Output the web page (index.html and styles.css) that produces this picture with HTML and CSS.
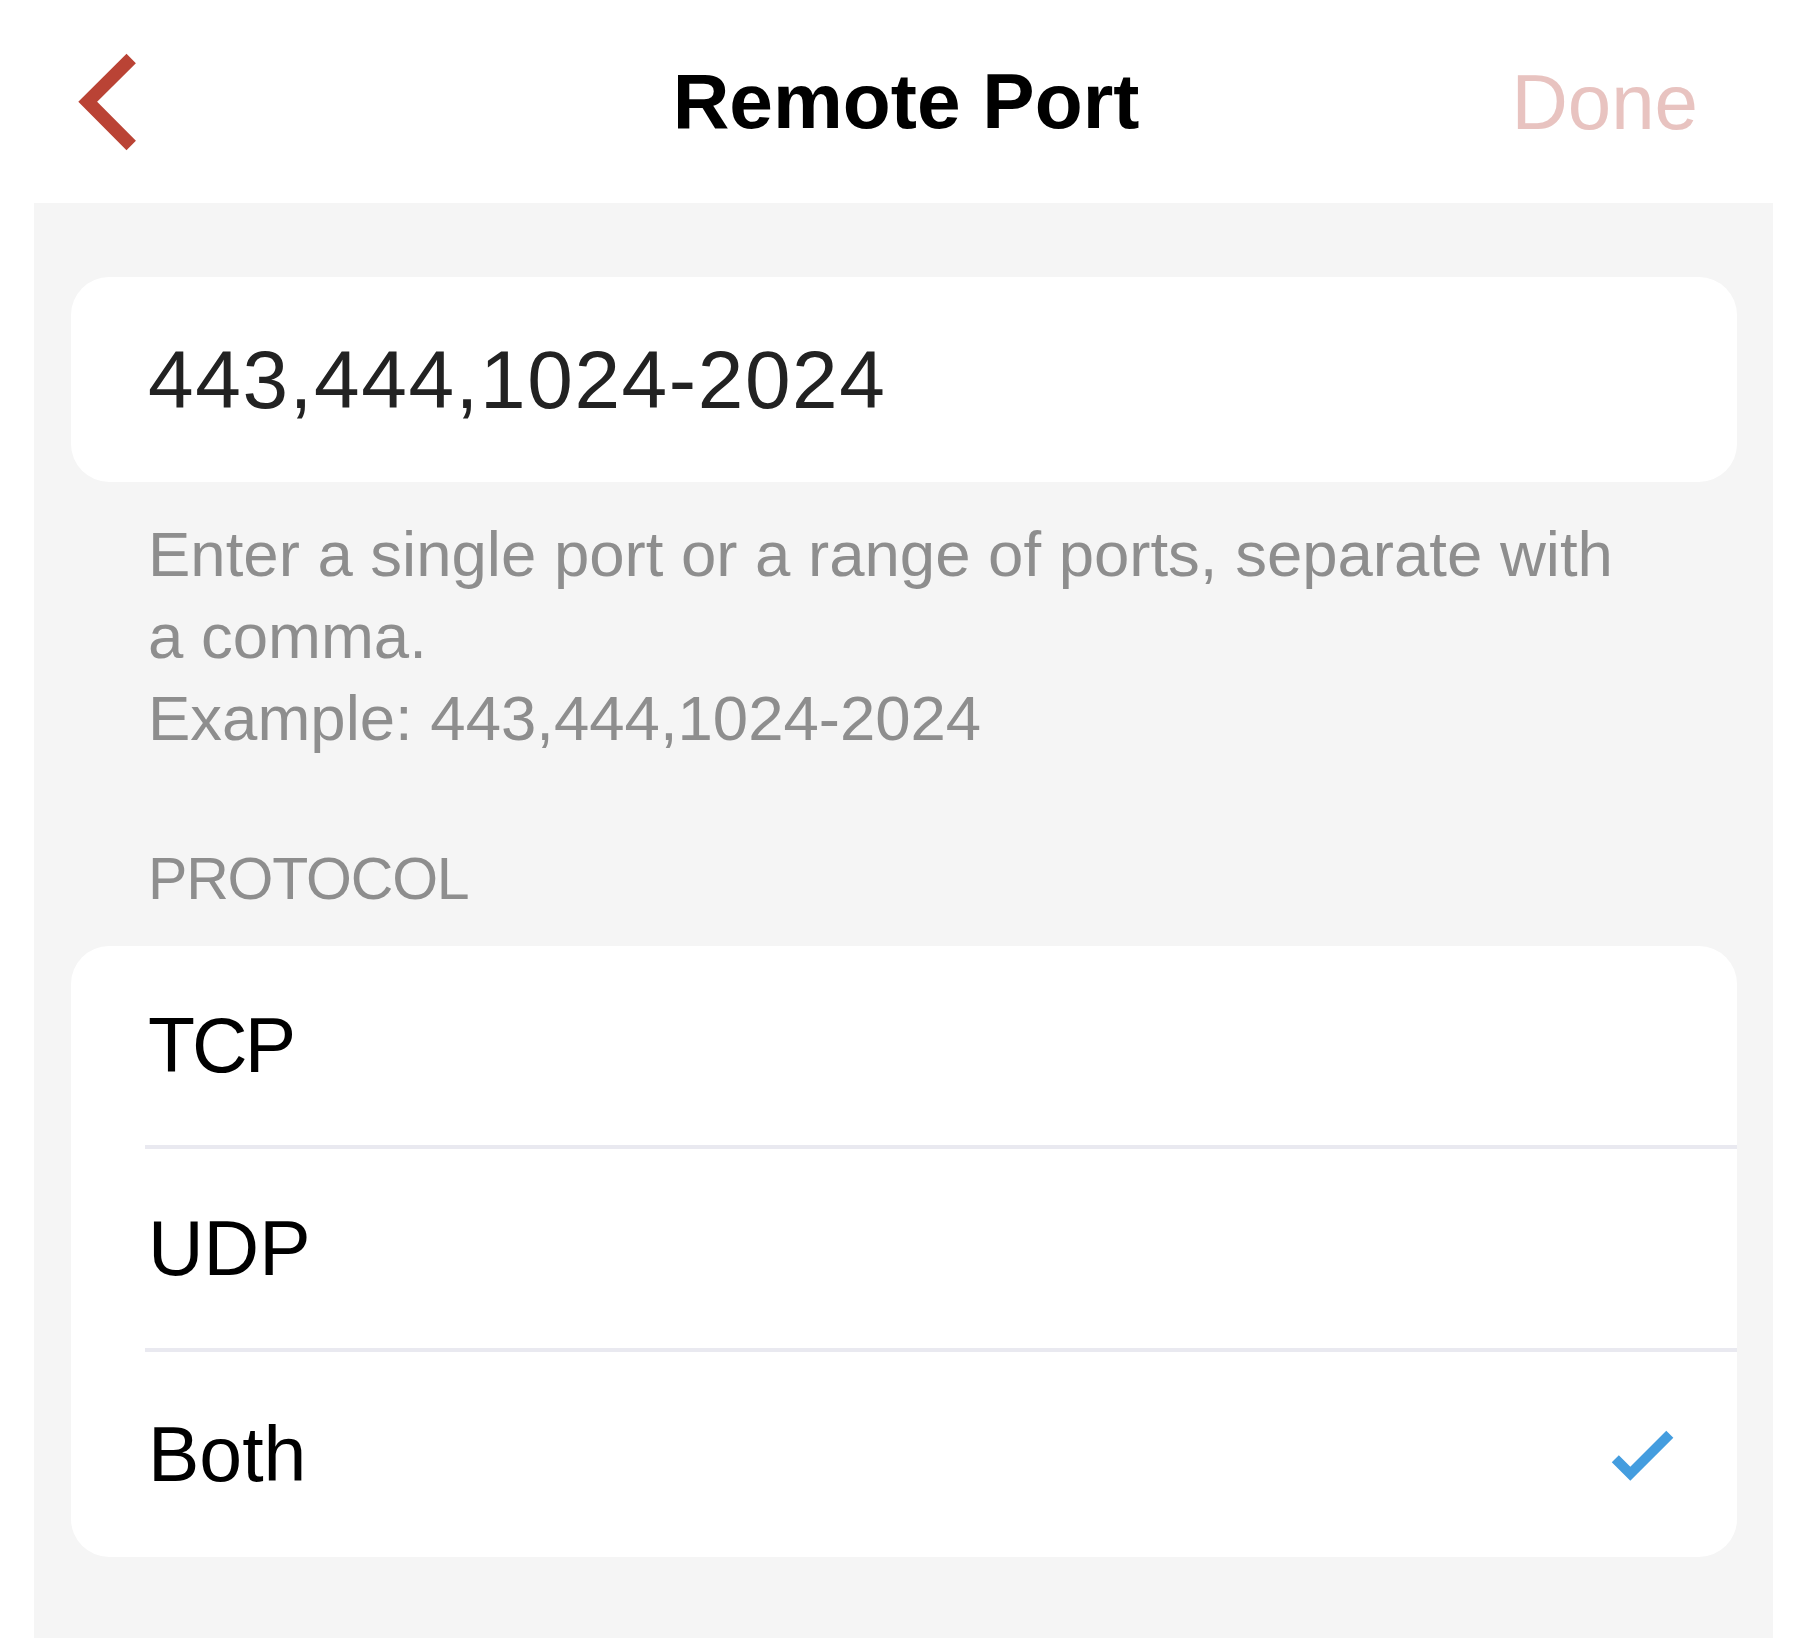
FILE: index.html
```html
<!DOCTYPE html>
<html lang="en">
<head>
<meta charset="utf-8">
<title>Remote Port</title>
<link rel="stylesheet" href="styles.css">
</head>
<body>
<div class="screen">
  <header class="nav">
    <div class="nav-left">
      <svg class="back" width="62" height="100" viewBox="0 0 62 100" aria-label="Back">
        <polyline points="55.2,6.5 11.7,49.7 55.2,93.5" fill="none" stroke="#BA4335" stroke-width="13.3" stroke-linecap="butt" stroke-linejoin="miter"/>
      </svg>
    </div>
    <h1 class="nav-title">Remote Port</h1>
    <div class="nav-right"><span class="done">Done</span></div>
  </header>

  <main class="panel">
    <div class="card input-card">
      <span class="port-value">443,444,1024-2024</span>
    </div>

    <div class="helper">
      <p>Enter a single port or a range of ports, separate with a comma.</p>
      <p>Example: 443,444,1024-2024</p>
    </div>

    <div class="section-label">PROTOCOL</div>

    <div class="card options">
      <div class="option"><div class="option-inner"><span class="label-tight">TCP</span></div></div>
      <div class="option"><div class="option-inner"><span>UDP</span></div></div>
      <div class="option"><div class="option-inner"><span>Both</span>
        <svg class="check" width="66" height="56" viewBox="0 0 66 56" aria-label="Selected">
          <polyline points="7.3,31.8 22.3,46.8 61.8,7.3" fill="none" stroke="#449DDF" stroke-width="10" stroke-linecap="butt" stroke-linejoin="miter"/>
        </svg>
      </div></div>
    </div>
  </main>
</div>
</body>
</html>
```

FILE: styles.css
```css
html, body {
  margin: 0;
  padding: 0;
  background: #ffffff;
}

body {
  font-family: "Liberation Sans", Arial, sans-serif;
  color: #000;
}

.screen {
  display: flex;
  flex-direction: column;
  height: 100vh;
  overflow: hidden;
}

/* Navigation bar */
.nav {
  flex: 0 0 auto;
  height: 203px;
  display: grid;
  grid-template-columns: 1fr auto 1fr;
  align-items: center;
}

.nav-left {
  padding-left: 76px;
  display: flex;
  align-items: center;
}

.back {
  display: block;
}

.nav-title {
  margin: 0;
  font-size: 78.5px;
  line-height: 1;
  font-weight: 700;
  color: #000;
}

.nav-right {
  justify-self: end;
  padding-right: 114px;
}

.done {
  display: block;
  font-size: 78px;
  line-height: 1;
  color: #E8C3C0;
}

/* Gray content panel */
.panel {
  flex: 1 1 auto;
  margin-left: 34px;
  width: 1739px;
  background: #F5F5F5;
  padding: 74px 36px 0 37px;
  box-sizing: border-box;
}

.card {
  background: #FFFFFF;
  border-radius: 38px;
}

.input-card {
  height: 205px;
  display: flex;
  align-items: center;
  padding-left: 77px;
}

.port-value {
  font-size: 82px;
  line-height: 1;
  letter-spacing: 1.6px;
  color: #222222;
}

.helper {
  margin-top: 31px;
  padding-left: 77px;
  max-width: 1490px;
  font-size: 63.5px;
  line-height: 82px;
  color: #8E8E8E;
}

.helper p {
  margin: 0;
}

.section-label {
  margin-top: 85px;
  padding-left: 77px;
  font-size: 59px;
  line-height: 70px;
  letter-spacing: -1.2px;
  color: #8E8E8E;
}

.options {
  margin-top: 32px;
}

.option {
  padding-left: 74px;
}

.option-inner {
  height: 199px;
  display: flex;
  align-items: center;
  justify-content: space-between;
  padding-left: 3px;
  padding-right: 63px;
  font-size: 77px;
  line-height: 1;
  color: #000;
}

.label-tight {
  letter-spacing: -3px;
}

.option + .option .option-inner {
  border-top: 4px solid #E9E9F0;
}

.option:last-child .option-inner {
  height: 205px;
}

.check {
  display: block;
}
```
